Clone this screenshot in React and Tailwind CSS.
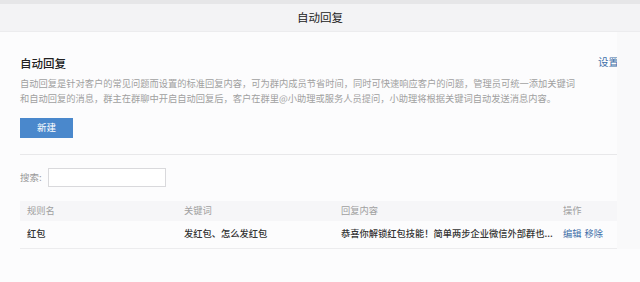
const rows = [
  {
    name: "红包",
    keywords: "发红包、怎么发红包",
    content: "恭喜你解锁红包技能！简单两步企业微信外部群也...",
  },
];

export default function App() {
  return (
    <div
      className="w-[640px] h-[282px] bg-[#fcfcfd] text-[#333] overflow-hidden"
      style={{ fontFamily: '"Noto Sans CJK SC", "Noto Sans", sans-serif' }}
    >
      <div className="h-[4px] bg-[#e6e6e8]" />
      <div className="h-[28px] bg-[#f3f3f5] border-b border-[#ececee] flex items-center justify-center text-[11.5px] text-[#222]">
        自动回复
      </div>

      <div className="flex">
        <div className="w-[617px] pl-[20px]">
          <div className="flex items-center justify-between pt-[26px]">
            <h1 className="text-[11.5px] font-medium text-[#222] leading-none">自动回复</h1>
            <a className="text-[10.5px] text-[#3d6ea8] leading-none -mr-[2px] -mt-[3px]">设置</a>
          </div>

          <div className="mt-[6px] text-[9.25px] leading-[15.5px] text-[#a0a0a0]">
            <p className="whitespace-nowrap">
              自动回复是针对客户的常见问题而设置的标准回复内容，可为群内成员节省时间，同时可快速响应客户的问题，管理员可统一添加关键词
            </p>
            <p className="whitespace-nowrap">
              和自动回复的消息，群主在群聊中开启自动回复后，客户在群里@小助理或服务人员提问，小助理将根据关键词自动发送消息内容。
            </p>
          </div>

          <button className="mt-[11px] block w-[53px] h-[20px] bg-[#4a88cc] text-white text-[9.5px]">
            新建
          </button>

          <div className="mt-[16px] border-t border-[#e8e8ea]" />

          <div className="mt-[13px] flex items-center gap-[6px]">
            <span className="text-[9.5px] text-[#999]">搜索:</span>
            <input className="w-[118px] h-[19px] border border-[#d9d9dc] bg-white outline-none" />
          </div>

          <table className="mt-[14px] w-full text-left border-collapse">
            <thead>
              <tr className="bg-[#f6f6f8] text-[9.25px] text-[#a0a0a0] h-[20px]">
                <th className="font-normal pl-[7px] w-[164px]">规则名</th>
                <th className="font-normal w-[157px]">关键词</th>
                <th className="font-normal w-[222px]">回复内容</th>
                <th className="font-normal">操作</th>
              </tr>
            </thead>
            <tbody>
              {rows.map((r) => (
                <tr key={r.name} className="h-[28px] border-b border-[#ececee] text-[9.25px] text-[#333] font-medium">
                  <td className="pl-[7px]">{r.name}</td>
                  <td>{r.keywords}</td>
                  <td className="whitespace-nowrap">{r.content}</td>
                  <td className="text-[#3d6ea8] font-normal whitespace-nowrap">
                    <span className="mr-[3px]">编辑</span>
                    <span>移除</span>
                  </td>
                </tr>
              ))}
            </tbody>
          </table>
        </div>
        <div className="flex-1 bg-[#f9f9fa]" />
      </div>
    </div>
  );
}
